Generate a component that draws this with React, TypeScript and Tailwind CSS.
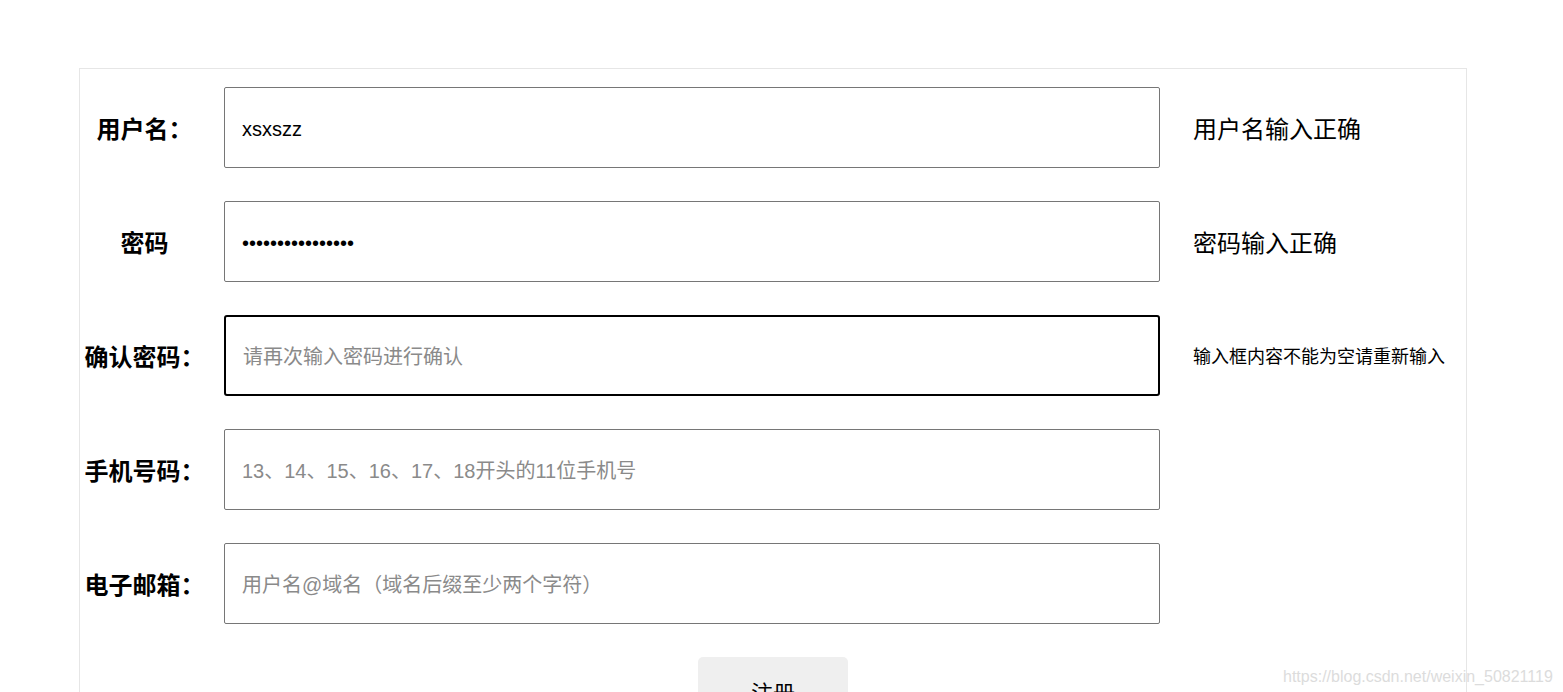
const rows = [
  { label: "用户名：", value: "xsxszz", type: "text", hint: "用户名输入正确", hintSize: "text-[24px]" },
  { label: "密码", value: "1234567890123456", type: "password", hint: "密码输入正确", hintSize: "text-[24px]" },
  { label: "确认密码：", placeholder: "请再次输入密码进行确认", type: "password", hint: "输入框内容不能为空请重新输入", hintSize: "text-[18px]", focus: true },
  { label: "手机号码：", placeholder: "13、14、15、16、17、18开头的11位手机号", type: "text" },
  { label: "电子邮箱：", placeholder: "用户名@域名（域名后缀至少两个字符）", type: "text" },
];

export default function App() {
  return (
    <div className="min-h-[692px] bg-white pt-[68px] font-['Liberation_Sans','Noto_Sans_CJK_SC',sans-serif] relative overflow-hidden">
      <div className="ml-[79px] w-[1388px] border border-[#e6e6e6] pt-[18px] pb-[20px]">
        <div className="flex flex-col gap-[33px]">
          {rows.map((r) => (
            <div key={r.label} className="flex items-center">
              <label className="w-[129px] pt-[5px] text-center text-[24px] font-bold text-black">{r.label}</label>
              <input
                type={r.type}
                defaultValue={r.value}
                placeholder={r.placeholder}
                readOnly
                className={
                  "ml-[15px] w-[936px] h-[81px] px-[17px] pt-[3px] text-[20px] text-black placeholder:text-[#8a8a8a] outline-none bg-white " +
                  (r.focus ? "border-2 border-black rounded-[3px] px-[16px]" : "border border-[#767676] rounded-[2px]")
                }
              />
              {r.hint && <span className={"ml-[33px] pt-[4px] text-black " + r.hintSize}>{r.hint}</span>}
            </div>
          ))}
        </div>
        <div className="flex justify-center mt-[33px]">
          <button className="w-[150px] h-[72px] rounded-[5px] bg-[#efefef] text-[22px] text-black">注册</button>
        </div>
      </div>
      <span className="absolute left-[1283px] top-[665px] text-[16px] text-[#dcdcdc]">https://blog.csdn.net/weixin_50821119</span>
    </div>
  );
}
